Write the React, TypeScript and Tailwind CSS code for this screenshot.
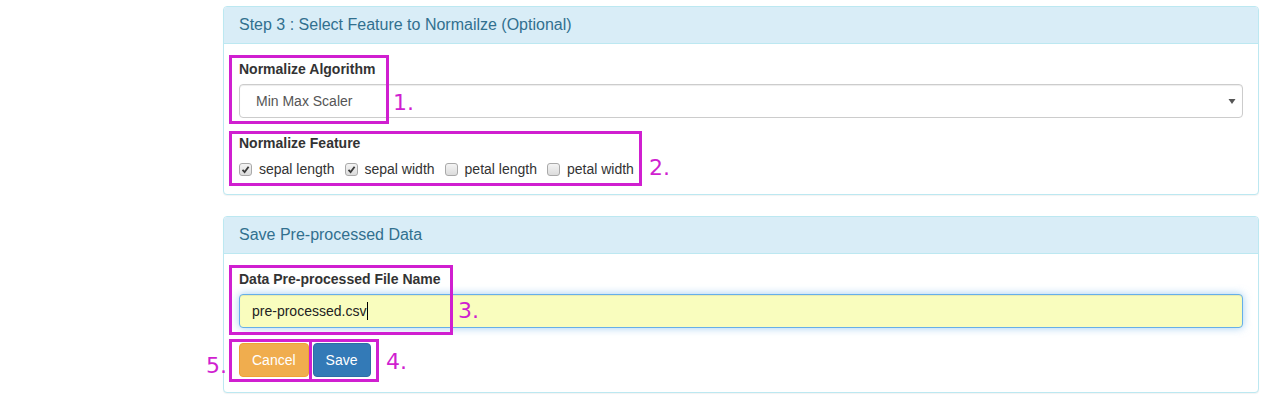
import React from "react";

const font = { fontFamily: '"Liberation Sans", Arial, sans-serif' };

function Check({ checked, label }: { checked: boolean; label: string }) {
  return (
    <label className="flex items-center mr-[10px] text-[14px] leading-[20px] text-[#333]">
      <span className="w-[13px] h-[13px] rounded-[3px] border border-[#a9a9a9] bg-gradient-to-b from-[#f4f4f4] to-[#dcdcdc] flex items-center justify-center mr-[7px]">
        {checked && (
          <svg width="9" height="9" viewBox="0 0 9 9">
            <path d="M1.5 4.8 L3.6 7 L7.6 1.8" fill="none" stroke="#3a3a3a" strokeWidth="1.8" />
          </svg>
        )}
      </span>
      {label}
    </label>
  );
}

function Panel({ title, children }: { title: string; children: React.ReactNode }) {
  return (
    <div className="border border-[#bce8f1] rounded-[4px] bg-white shadow-[0_1px_1px_rgba(0,0,0,0.05)] mb-[21px]">
      <div className="bg-[#d9edf7] border-b border-[#bce8f1] rounded-t-[3px] px-[15px] h-[37px] flex items-center text-[16px] text-[#31708f]">
        {title}
      </div>
      <div className="px-[15px] pt-[15px] pb-[15px]">{children}</div>
    </div>
  );
}

// annotation overlays drawn on top of the form
function Mark({ className }: { className: string }) {
  return <div className={`absolute border-[3px] border-[#d01fd0] ${className}`} />;
}

function Num({ n, className }: { n: string; className: string }) {
  return (
    <div
      className={`absolute text-[22px] leading-none text-[#d01fd0] ${className}`}
      style={{ fontFamily: '"DejaVu Sans", sans-serif' }}
    >
      {n}
    </div>
  );
}

export default function App() {
  return (
    <div className="relative w-[1267px] h-[408px] bg-white overflow-hidden" style={font}>
      <div className="pl-[223px] pr-[8px] pt-[6px]">
        <Panel title="Step 3 : Select Feature to Normailze (Optional)">
          <div className="text-[14px] font-bold leading-[20px] text-[#333] mb-[5px]">Normalize Algorithm</div>
          <div className="h-[34px] border border-[#ccc] rounded-[4px] flex items-center justify-between pl-[16px] pr-[6px] text-[14px] text-[#555] shadow-[inset_0_1px_1px_rgba(0,0,0,0.075)]">
            <span>Min Max Scaler</span>
            <svg width="8" height="7" viewBox="0 0 8 7">
              <path d="M0.5 1 L7.5 1 L4 6 Z" fill="#555" />
            </svg>
          </div>
          <div className="text-[14px] font-bold leading-[20px] text-[#333] mt-[15px] mb-[5px]">Normalize Feature</div>
          <div className="flex pt-[1px]">
            <Check checked label="sepal length" />
            <Check checked label="sepal width" />
            <Check checked={false} label="petal length" />
            <Check checked={false} label="petal width" />
          </div>
        </Panel>
        <Panel title="Save Pre-processed Data">
          <div className="text-[14px] font-bold leading-[20px] text-[#333] mb-[5px]">Data Pre-processed File Name</div>
          <div className="h-[34px] border border-[#66afe9] rounded-[4px] bg-[#f9fdbe] flex items-center pl-[12px] text-[14px] text-[#222] shadow-[inset_0_1px_1px_rgba(0,0,0,0.075),0_0_8px_rgba(102,175,233,0.6)]">
            <span>pre-processed.csv</span>
            <span className="w-[1px] h-[18px] bg-black ml-[1px]" />
          </div>
          <div className="flex gap-[4px] mt-[15px]">
            <button className="h-[34px] px-[12px] rounded-[4px] bg-[#f0ad4e] border border-[#eea236] text-white text-[14px]">
              Cancel
            </button>
            <button className="h-[34px] px-[12px] rounded-[4px] bg-[#337ab7] border border-[#2e6da4] text-white text-[14px]">
              Save
            </button>
          </div>
        </Panel>
      </div>

      <Mark className="left-[229px] top-[55px] w-[160px] h-[69px]" />
      <Num n="1." className="left-[393px] top-[92px]" />
      <Mark className="left-[229px] top-[131px] w-[413px] h-[55px]" />
      <Num n="2." className="left-[649px] top-[157px]" />
      <Mark className="left-[229px] top-[265px] w-[224px] h-[70px]" />
      <Num n="3." className="left-[458px] top-[300px]" />
      <Mark className="left-[229px] top-[339px] w-[83px] h-[43px]" />
      <Mark className="left-[309px] top-[339px] w-[70px] h-[43px]" />
      <Num n="4." className="left-[386px] top-[351px]" />
      <Num n="5." className="left-[206px] top-[355px]" />
    </div>
  );
}
